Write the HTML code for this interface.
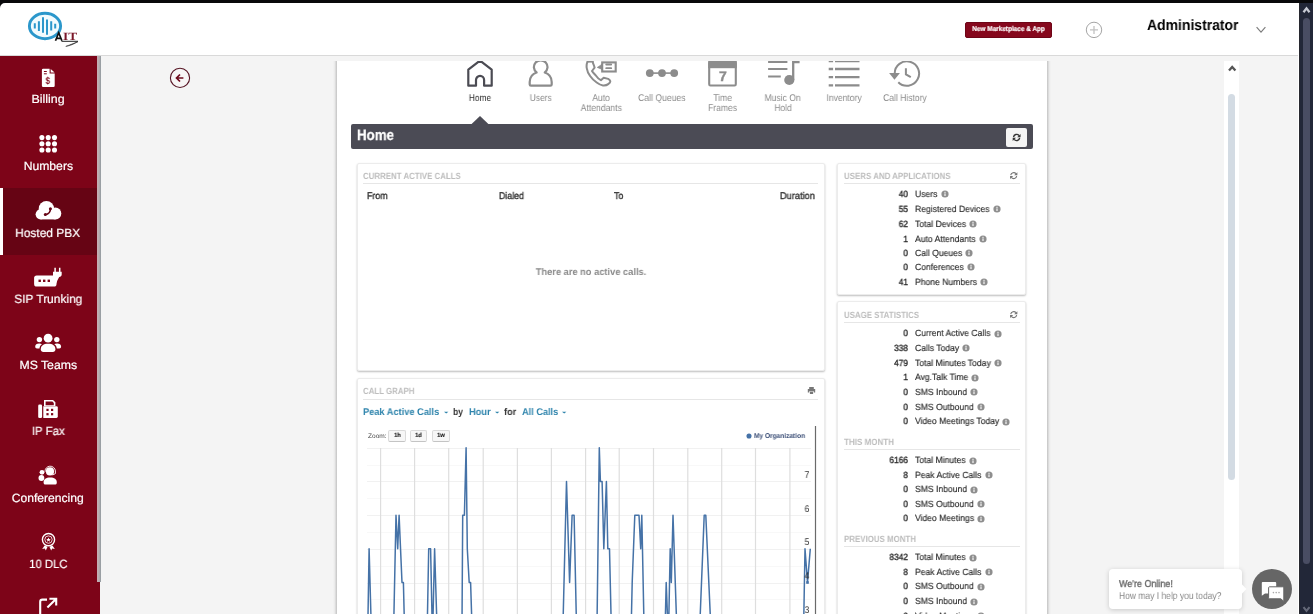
<!DOCTYPE html>
<html><head><meta charset="utf-8"><title>Home</title>
<style>
html,body{margin:0;padding:0;width:1313px;height:614px;overflow:hidden;}
body{background:#f4f4f4;font-family:"Liberation Sans",sans-serif;}
#root{position:relative;width:1313px;height:614px;overflow:hidden;background:#f4f4f4;}
.t{position:absolute;white-space:nowrap;display:block;text-rendering:geometricPrecision;will-change:transform;}
svg{position:absolute;overflow:visible;}
.card{position:absolute;background:#fff;border:1px solid #ececec;box-shadow:0 1px 2px rgba(0,0,0,.26);box-sizing:border-box;border-radius:2px;}
.hr{position:absolute;height:1px;background:#e6e6e6;}
</style></head><body><div id="root">
<div style="position:absolute;left:333px;top:61px;width:4px;height:560px;background:linear-gradient(90deg,rgba(0,0,0,0),rgba(0,0,0,.04) 40%,rgba(0,0,0,.2));"></div>
<div style="position:absolute;left:1047px;top:61px;width:4px;height:560px;background:linear-gradient(270deg,rgba(0,0,0,0),rgba(0,0,0,.04) 40%,rgba(0,0,0,.2));"></div>
<div style="position:absolute;left:337px;top:61px;width:710px;height:560px;background:#fff;"></div>
<svg width="1313" height="614" viewBox="0 0 1313 614" style="left:0;top:0">
<defs><clipPath id="pc"><rect x="337" y="61" width="710" height="560"/></clipPath></defs>
<g clip-path="url(#pc)" fill="none">
<path d="M468.3,85.7 V69.6 L480,60.6 L491.7,69.6 V85.7 H484.1 V80 a4.05,4.05 0 0 0 -8.1,0 V85.7 Z" stroke="#4b4b53" stroke-width="2.2" stroke-linejoin="round"/>
<path d="M536.6,72.5 A6.8,6.8 0 1 1 544.8,72.5 C549.4,74.1 551.7,77.6 551.7,82 V84.4 Q551.7,85.6 550.4,85.6 H531 Q529.7,85.6 529.7,84.4 V82 C529.7,77.6 532,74.1 536.6,72.5 Z" stroke="#8c8c8c" stroke-width="2.2" stroke-linejoin="round"/>
<!-- phone -->
<path d="M588.6,59 C586.5,63 586.3,66 586.8,68.4 C587.3,71.5 588.3,73.5 589.9,75.7 C591.8,78.5 594,80.5 596.7,82.5 C599,84.2 601,85.2 602.9,85.4 C605,85.6 606.8,85.2 608.2,84.1 C609.8,83 610.6,82 610.2,80.9 C609.9,80 609.2,79.4 608.2,78.9 L603.7,77.8 L600.9,80.2 C598.6,79 597,77.2 595.6,75.2 C594,73.5 592.8,72.4 592,71 L594.6,67.6 C594.2,66 593.6,64.6 593,63.2 L592.5,59" stroke="#8c8c8c" stroke-width="2" stroke-linejoin="round"/>
<path d="M588,61.8 H593" stroke="#8c8c8c" stroke-width="1.6"/>
<!-- bubble -->
<rect x="602.2" y="62.4" width="13.5" height="9.1" stroke="#8c8c8c" stroke-width="2.1"/>
<path d="M602,64.2 L597.2,67.4 L602,69.4 Z" fill="#8c8c8c" stroke="#8c8c8c" stroke-width="0.6" stroke-linejoin="round"/>
<path d="M606.2,64.5 H611.2 M606.2,68.2 H611.2" stroke="#8c8c8c" stroke-width="1.8" stroke-linecap="round"/>
<!-- queues -->
<path d="M650,73.1 H674" stroke="#8c8c8c" stroke-width="1.6"/>
<circle cx="649.8" cy="73.1" r="3.9" fill="#8c8c8c"/><circle cx="662" cy="73.1" r="3.9" fill="#8c8c8c"/><circle cx="674.2" cy="73.1" r="3.9" fill="#8c8c8c"/>
<!-- calendar -->
<rect x="709.2" y="62" width="26.6" height="23.5" rx="1.2" stroke="#8c8c8c" stroke-width="2.1"/>
<rect x="708.2" y="61" width="28.6" height="7.2" fill="#8c8c8c"/>
<!-- music -->
<path d="M768.1,62 H787.4 M768.1,69 H787.4 M768.1,76.5 H780.8" stroke="#8c8c8c" stroke-width="2"/>
<path d="M793.2,80 V62 H799.6" stroke="#8c8c8c" stroke-width="2.3"/>
<circle cx="789.3" cy="80" r="5.1" fill="#8c8c8c"/>
<!-- inventory -->
<path d="M828.7,61.2 H833.1 M835,61.2 H859.5 M828.7,69 H833.1 M835,69 H859.5 M828.7,77.2 H833.1 M835,77.2 H859.5 M828.7,85.3 H833.1 M835,85.3 H859.5" stroke="#8c8c8c" stroke-width="2.3"/>
<!-- history -->
<path d="M894.7,73.6 A12.2,12.2 0 1 1 898.3,82.2" stroke="#8c8c8c" stroke-width="2"/>
<path d="M889.1,73.1 H899.9 L894.5,79.7 Z" fill="#8c8c8c"/>
<path d="M905.9,68.2 V74.3 L910.8,77.1" stroke="#8c8c8c" stroke-width="2"/>
</g></svg>
<span class="t" style="left:718.61px;top:69.00px;font-size:14px;line-height:14px;color:#8c8c8c;font-weight:bold;transform:scale(1.0000,1);transform-origin:50% 12px;-webkit-text-stroke:0.4px #8c8c8c;">7</span>
<span class="t" style="left:467.00px;top:94.00px;font-size:9.75px;line-height:9.75px;color:#333;transform:scale(0.8574,1);transform-origin:50% 7px;">Home</span>
<span class="t" style="left:528.07px;top:94.00px;font-size:9.75px;line-height:9.75px;color:#8c8c8c;transform:scale(0.8641,1);transform-origin:50% 7px;">Users</span>
<span class="t" style="left:590.97px;top:94.00px;font-size:9.75px;line-height:9.75px;color:#8c8c8c;transform:scale(0.8625,1);transform-origin:50% 7px;">Auto</span>
<span class="t" style="left:577.99px;top:104.00px;font-size:9.75px;line-height:9.75px;color:#8c8c8c;transform:scale(0.8838,1);transform-origin:50% 7px;">Attendants</span>
<span class="t" style="left:634.97px;top:94.00px;font-size:9.75px;line-height:9.75px;color:#8c8c8c;transform:scale(0.8853,1);transform-origin:50% 7px;">Call Queues</span>
<span class="t" style="left:712.05px;top:94.00px;font-size:9.75px;line-height:9.75px;color:#8c8c8c;transform:scale(0.8730,1);transform-origin:50% 7px;">Time</span>
<span class="t" style="left:705.98px;top:104.00px;font-size:9.75px;line-height:9.75px;color:#8c8c8c;transform:scale(0.8776,1);transform-origin:50% 7px;">Frames</span>
<span class="t" style="left:762.41px;top:94.00px;font-size:9.75px;line-height:9.75px;color:#8c8c8c;transform:scale(0.8767,1);transform-origin:50% 7px;">Music On</span>
<span class="t" style="left:773.17px;top:104.00px;font-size:9.75px;line-height:9.75px;color:#8c8c8c;transform:scale(0.8527,1);transform-origin:50% 7px;">Hold</span>
<span class="t" style="left:823.75px;top:94.00px;font-size:9.75px;line-height:9.75px;color:#8c8c8c;transform:scale(0.8777,1);transform-origin:50% 7px;">Inventory</span>
<span class="t" style="left:879.78px;top:94.00px;font-size:9.75px;line-height:9.75px;color:#8c8c8c;transform:scale(0.8728,1);transform-origin:50% 7px;">Call History</span>
<div style="position:absolute;left:351px;top:124px;width:682px;height:24.5px;background:#4b4b55;border-radius:2px;"></div>
<svg width="20" height="10" viewBox="0 0 20 10" style="left:470px;top:115.4px"><path d="M1.6,9 L10,0.9 L18.4,9 Z" fill="#4b4b55"/></svg>
<span class="t" style="left:357.10px;top:128.00px;font-size:15px;line-height:15px;color:#fff;font-weight:bold;transform:scale(0.8878,1);transform-origin:0 12px;-webkit-text-stroke:0.25px #fff;">Home</span>
<div style="position:absolute;left:1006px;top:128px;width:21px;height:18.8px;background:#f4f4f4;border-radius:2px;"></div>
<svg width="1313" height="614" viewBox="0 0 1313 614" style="left:0;top:0"><g fill="none" stroke="#333" stroke-width="1.4"><path d="M1013.53,137.07 A3.1,3.1 0 0 1 1019.04,135.59"/><path d="M1019.67,137.93 A3.1,3.1 0 0 1 1014.16,139.41"/></g><path d="M1020.54,133.98 V137.19 H1017.18 Z" fill="#333"/><path d="M1012.66,141.02 V137.81 H1016.02 Z" fill="#333"/></svg>
<div class="card" style="left:356.5px;top:163px;width:468px;height:208px"></div>
<span class="t" style="left:363.30px;top:172.00px;font-size:9px;line-height:9px;color:#bdbdbd;font-weight:bold;transform:scale(0.8749,1);transform-origin:0 7px;">CURRENT ACTIVE CALLS</span>
<div class="hr" style="left:363px;top:183px;width:455px"></div>
<span class="t" style="left:366.60px;top:192.00px;font-size:9.75px;line-height:9.75px;color:#333;transform:scale(0.9000,1);transform-origin:0 7px;-webkit-text-stroke:0.35px #333;">From</span>
<span class="t" style="left:498.60px;top:192.00px;font-size:9.75px;line-height:9.75px;color:#333;transform:scale(0.9000,1);transform-origin:0 7px;-webkit-text-stroke:0.35px #333;">Dialed</span>
<span class="t" style="left:614.30px;top:192.00px;font-size:9.75px;line-height:9.75px;color:#333;transform:scale(0.9000,1);transform-origin:0 7px;-webkit-text-stroke:0.35px #333;">To</span>
<span class="t" style="left:777.65px;top:192.00px;font-size:9.75px;line-height:9.75px;color:#333;transform:scale(0.9470,1);transform-origin:100% 7px;-webkit-text-stroke:0.35px #333;">Duration</span>
<span class="t" style="left:532.51px;top:268.00px;font-size:9.75px;line-height:9.75px;color:#8a8a8a;font-weight:bold;transform:scale(0.9528,1);transform-origin:50% 7px;">There are no active calls.</span>
<div class="card" style="left:356.5px;top:378px;width:468px;height:260px"></div>
<span class="t" style="left:363.20px;top:387.00px;font-size:9px;line-height:9px;color:#bdbdbd;font-weight:bold;transform:scale(0.8753,1);transform-origin:0 7px;">CALL GRAPH</span>
<div class="hr" style="left:363px;top:399px;width:455px"></div>
<span class="t" style="left:363.40px;top:408.00px;font-size:9.75px;line-height:9.75px;color:#2e84ac;font-weight:bold;transform:scale(0.9478,1);transform-origin:0 7px;">Peak Active Calls</span>
<span class="t" style="left:453.30px;top:408.00px;font-size:9.75px;line-height:9.75px;color:#333;font-weight:bold;transform:scale(0.8701,1);transform-origin:0 7px;">by</span>
<span class="t" style="left:469.30px;top:408.00px;font-size:9.75px;line-height:9.75px;color:#2e84ac;font-weight:bold;transform:scale(0.9496,1);transform-origin:0 7px;">Hour</span>
<span class="t" style="left:504.00px;top:408.00px;font-size:9.75px;line-height:9.75px;color:#333;font-weight:bold;transform:scale(0.9387,1);transform-origin:0 7px;">for</span>
<span class="t" style="left:521.60px;top:408.00px;font-size:9.75px;line-height:9.75px;color:#2e84ac;font-weight:bold;transform:scale(0.9410,1);transform-origin:0 7px;">All Calls</span>
<svg width="6" height="4" viewBox="0 0 6 4" style="left:443.8px;top:411.3px"><path d="M0,0.8 H4.4 L2.2,2.6 Z" fill="#2e84ac"/></svg>
<svg width="6" height="4" viewBox="0 0 6 4" style="left:494.6px;top:411.3px"><path d="M0,0.8 H4.4 L2.2,2.6 Z" fill="#2e84ac"/></svg>
<svg width="6" height="4" viewBox="0 0 6 4" style="left:561.5999999999999px;top:411.3px"><path d="M0,0.8 H4.4 L2.2,2.6 Z" fill="#2e84ac"/></svg>
<svg width="10" height="10" viewBox="0 0 10 10" style="left:807px;top:386px"><path d="M2.2,1 H6.8 V3 H2.2 Z M0.8,3 H8.2 V6.6 H6.8 V5.2 H2.2 V6.6 H0.8 Z M2.9,5.8 H6.1 V8 H2.9 Z" fill="#777"/></svg>
<span class="t" style="left:367.90px;top:434.00px;font-size:6.5px;line-height:6.5px;color:#4a4a4a;transform:scale(1.0097,1);transform-origin:0 4px;">Zoom:</span>
<div style="position:absolute;left:388.1px;top:429.5px;width:18.3px;height:12px;background:#f7f7f7;border:1px solid #dadada;border-bottom-color:#c4c4c4;border-radius:2px;box-sizing:border-box;"></div>
<span class="t" style="left:394.05px;top:433.00px;font-size:6px;line-height:6px;color:#222;font-weight:bold;transform:scale(0.9283,1);transform-origin:50% 4px;-webkit-text-stroke:0.15px #222;">1h</span>
<div style="position:absolute;left:410px;top:429.5px;width:17.3px;height:12px;background:#f7f7f7;border:1px solid #dadada;border-bottom-color:#c4c4c4;border-radius:2px;box-sizing:border-box;"></div>
<span class="t" style="left:415.45px;top:433.00px;font-size:6px;line-height:6px;color:#222;font-weight:bold;transform:scale(0.9283,1);transform-origin:50% 4px;-webkit-text-stroke:0.15px #222;">1d</span>
<div style="position:absolute;left:432px;top:429.5px;width:18.1px;height:12px;background:#f7f7f7;border:1px solid #dadada;border-bottom-color:#c4c4c4;border-radius:2px;box-sizing:border-box;"></div>
<span class="t" style="left:437.35px;top:433.00px;font-size:6px;line-height:6px;color:#222;font-weight:bold;transform:scale(0.9620,1);transform-origin:50% 4px;-webkit-text-stroke:0.15px #222;">1w</span>
<svg width="8" height="8" viewBox="0 0 8 8" style="left:745.3px;top:431.5px"><circle cx="4" cy="4" r="2.55" fill="#4572a7"/></svg>
<span class="t" style="left:753.90px;top:433.00px;font-size:7px;line-height:7px;color:#3d5078;font-weight:bold;transform:scale(0.9367,1);transform-origin:0 5px;">My Organization</span>
<svg width="1313" height="614" viewBox="0 0 1313 614" style="left:0;top:0">
<g stroke="#f1f1f1" stroke-width="1">
<path d="M367,448.5 H811"/>
<path d="M367,481.5 H811"/>
<path d="M367,515.5 H811"/>
<path d="M367,549.5 H811"/>
<path d="M367,583.5 H811"/>
<path d="M367,616.5 H811"/>
</g><g stroke="#f8f8f8" stroke-width="1">
<path d="M367,465.5 H811"/>
<path d="M367,498.5 H811"/>
<path d="M367,532.5 H811"/>
<path d="M367,566.5 H811"/>
<path d="M367,599.5 H811"/>
</g><g stroke="#dedede" stroke-width="1.2">
<path d="M380.6,448 V614"/>
<path d="M414.6,448 V614"/>
<path d="M448.7,448 V614"/>
<path d="M483.2,448 V614"/>
<path d="M517.4,448 V614"/>
<path d="M551.4,448 V614"/>
<path d="M585.6,448 V614"/>
<path d="M619.2,448 V614"/>
<path d="M653.5,448 V614"/>
<path d="M687.8,448 V614"/>
<path d="M721.7,448 V614"/>
<path d="M755.5,448 V614"/>
<path d="M789.9,448 V614"/>
</g>
<path d="M367.6,640.0 L369.1,548.8 L371.6,640.0 M393.4,640.0 L396.0,515.2 L397.7,548.8 L399.1,515.2 L402.0,582.5 L403.4,582.5 L404.8,640.0 M427.0,640.0 L428.7,548.8 L430.6,548.8 L432.5,640.0 L434.6,548.8 L437.4,640.0 M461.9,640.0 L462.7,515.2 L464.4,515.2 L466.1,447.8 L467.3,548.8 L469.2,582.5 L470.6,582.5 L472.4,640.0 M562.6,640.0 L566.5,481.5 L569.6,582.5 L572.1,515.2 L574.1,515.2 L576.8,640.0 M596.8,640.0 L599.3,447.8 L600.4,481.5 L602.1,481.5 L603.8,548.8 L606.4,481.5 L607.8,548.8 L609.5,548.8 L611.6,640.0 M630.9,640.0 L632.2,582.5 L634.8,515.2 L639.0,515.2 L640.7,548.8 L641.8,515.2 L644.3,640.0 M664.8,640.0 L666.2,582.5 L668.4,640.0 L670.2,548.8 L671.3,582.5 L673.0,515.2 L677.2,640.0 M699.2,640.0 L704.2,515.2 L705.8,515.2 L711.4,640.0 M803.4,640.0 L805.0,548.8 L807.5,582.5 L810.3,548.8 " fill="none" stroke="#4572a7" stroke-width="1.5" stroke-linejoin="round"/>
<rect x="806.2" y="581.2" width="2.6" height="2.6" fill="#4572a7"/>
<path d="M815.5,426 V614" stroke="#6a6a6a" stroke-width="1.2"/>
</svg>
<span class="t" style="left:804.18px;top:471.00px;font-size:9.75px;line-height:9.75px;color:#333;transform:scale(0.9000,1);transform-origin:100% 7px;">7</span>
<span class="t" style="left:804.18px;top:505.00px;font-size:9.75px;line-height:9.75px;color:#333;transform:scale(0.9000,1);transform-origin:100% 7px;">6</span>
<span class="t" style="left:804.18px;top:538.00px;font-size:9.75px;line-height:9.75px;color:#333;transform:scale(0.9000,1);transform-origin:100% 7px;">5</span>
<span class="t" style="left:804.18px;top:572.00px;font-size:9.75px;line-height:9.75px;color:#333;transform:scale(0.9000,1);transform-origin:100% 7px;">4</span>
<span class="t" style="left:804.18px;top:606.00px;font-size:9.75px;line-height:9.75px;color:#333;transform:scale(0.9000,1);transform-origin:100% 7px;">3</span>
<div class="card" style="left:836.9px;top:162.5px;width:189.1px;height:132px"></div>
<span class="t" style="left:844.00px;top:172.00px;font-size:9px;line-height:9px;color:#bdbdbd;font-weight:bold;transform:scale(0.8789,1);transform-origin:0 7px;">USERS AND APPLICATIONS</span>
<svg width="1313" height="614" viewBox="0 0 1313 614" style="left:0;top:0"><g fill="none" stroke="#777" stroke-width="1.1"><path d="M1010.73,175.18 A3.0,3.0 0 0 1 1016.06,173.75"/><path d="M1016.67,176.02 A3.0,3.0 0 0 1 1011.34,177.45"/></g><path d="M1017.36,172.27 V175.30 H1014.11 Z" fill="#777"/><path d="M1010.04,178.93 V175.90 H1013.30 Z" fill="#777"/></svg>
<div class="hr" style="left:844px;top:183px;width:176px"></div>
<span class="t" style="left:897.59px;top:190.00px;font-size:9px;line-height:9px;color:#2a2a2a;transform:scale(0.9300,1);transform-origin:100% 7px;-webkit-text-stroke:0.35px #2a2a2a;">40</span>
<span class="t" style="left:915.30px;top:190.00px;font-size:9px;line-height:9px;color:#2a2a2a;transform:scale(0.9550,1);transform-origin:0 7px;-webkit-text-stroke:0.15px #2a2a2a;">Users</span>
<svg width="8" height="8" viewBox="0 0 8 8" style="left:940.55px;top:190.40px"><circle cx="4" cy="4" r="3.6" fill="#8e8e8e"/><rect x="3.45" y="3.4" width="1.1" height="2.6" fill="#fff"/><rect x="3.45" y="1.8" width="1.1" height="1.1" fill="#fff"/></svg>
<span class="t" style="left:897.59px;top:205.00px;font-size:9px;line-height:9px;color:#2a2a2a;transform:scale(0.9300,1);transform-origin:100% 7px;-webkit-text-stroke:0.35px #2a2a2a;">55</span>
<span class="t" style="left:915.30px;top:205.00px;font-size:9px;line-height:9px;color:#2a2a2a;transform:scale(0.9550,1);transform-origin:0 7px;-webkit-text-stroke:0.15px #2a2a2a;">Registered Devices</span>
<svg width="8" height="8" viewBox="0 0 8 8" style="left:992.62px;top:205.40px"><circle cx="4" cy="4" r="3.6" fill="#8e8e8e"/><rect x="3.45" y="3.4" width="1.1" height="2.6" fill="#fff"/><rect x="3.45" y="1.8" width="1.1" height="1.1" fill="#fff"/></svg>
<span class="t" style="left:897.59px;top:220.00px;font-size:9px;line-height:9px;color:#2a2a2a;transform:scale(0.9300,1);transform-origin:100% 7px;-webkit-text-stroke:0.35px #2a2a2a;">62</span>
<span class="t" style="left:915.30px;top:220.00px;font-size:9px;line-height:9px;color:#2a2a2a;transform:scale(0.9550,1);transform-origin:0 7px;-webkit-text-stroke:0.15px #2a2a2a;">Total Devices</span>
<svg width="8" height="8" viewBox="0 0 8 8" style="left:969.21px;top:220.40px"><circle cx="4" cy="4" r="3.6" fill="#8e8e8e"/><rect x="3.45" y="3.4" width="1.1" height="2.6" fill="#fff"/><rect x="3.45" y="1.8" width="1.1" height="1.1" fill="#fff"/></svg>
<span class="t" style="left:902.59px;top:235.00px;font-size:9px;line-height:9px;color:#2a2a2a;transform:scale(0.9300,1);transform-origin:100% 7px;-webkit-text-stroke:0.35px #2a2a2a;">1</span>
<span class="t" style="left:915.30px;top:235.00px;font-size:9px;line-height:9px;color:#2a2a2a;transform:scale(0.9550,1);transform-origin:0 7px;-webkit-text-stroke:0.15px #2a2a2a;">Auto Attendants</span>
<svg width="8" height="8" viewBox="0 0 8 8" style="left:978.79px;top:235.40px"><circle cx="4" cy="4" r="3.6" fill="#8e8e8e"/><rect x="3.45" y="3.4" width="1.1" height="2.6" fill="#fff"/><rect x="3.45" y="1.8" width="1.1" height="1.1" fill="#fff"/></svg>
<span class="t" style="left:902.59px;top:249.00px;font-size:9px;line-height:9px;color:#2a2a2a;transform:scale(0.9300,1);transform-origin:100% 7px;-webkit-text-stroke:0.35px #2a2a2a;">0</span>
<span class="t" style="left:915.30px;top:249.00px;font-size:9px;line-height:9px;color:#2a2a2a;transform:scale(0.9550,1);transform-origin:0 7px;-webkit-text-stroke:0.15px #2a2a2a;">Call Queues</span>
<svg width="8" height="8" viewBox="0 0 8 8" style="left:965.40px;top:249.40px"><circle cx="4" cy="4" r="3.6" fill="#8e8e8e"/><rect x="3.45" y="3.4" width="1.1" height="2.6" fill="#fff"/><rect x="3.45" y="1.8" width="1.1" height="1.1" fill="#fff"/></svg>
<span class="t" style="left:902.59px;top:263.00px;font-size:9px;line-height:9px;color:#2a2a2a;transform:scale(0.9300,1);transform-origin:100% 7px;-webkit-text-stroke:0.35px #2a2a2a;">0</span>
<span class="t" style="left:915.30px;top:263.00px;font-size:9px;line-height:9px;color:#2a2a2a;transform:scale(0.9550,1);transform-origin:0 7px;-webkit-text-stroke:0.15px #2a2a2a;">Conferences</span>
<svg width="8" height="8" viewBox="0 0 8 8" style="left:966.83px;top:263.40px"><circle cx="4" cy="4" r="3.6" fill="#8e8e8e"/><rect x="3.45" y="3.4" width="1.1" height="2.6" fill="#fff"/><rect x="3.45" y="1.8" width="1.1" height="1.1" fill="#fff"/></svg>
<span class="t" style="left:897.59px;top:278.00px;font-size:9px;line-height:9px;color:#2a2a2a;transform:scale(0.9300,1);transform-origin:100% 7px;-webkit-text-stroke:0.35px #2a2a2a;">41</span>
<span class="t" style="left:915.30px;top:278.00px;font-size:9px;line-height:9px;color:#2a2a2a;transform:scale(0.9550,1);transform-origin:0 7px;-webkit-text-stroke:0.15px #2a2a2a;">Phone Numbers</span>
<svg width="8" height="8" viewBox="0 0 8 8" style="left:980.21px;top:278.40px"><circle cx="4" cy="4" r="3.6" fill="#8e8e8e"/><rect x="3.45" y="3.4" width="1.1" height="2.6" fill="#fff"/><rect x="3.45" y="1.8" width="1.1" height="1.1" fill="#fff"/></svg>
<div class="card" style="left:836.9px;top:301px;width:189.1px;height:340px"></div>
<span class="t" style="left:844.00px;top:311.00px;font-size:9px;line-height:9px;color:#bdbdbd;font-weight:bold;transform:scale(0.8754,1);transform-origin:0 7px;">USAGE STATISTICS</span>
<svg width="1313" height="614" viewBox="0 0 1313 614" style="left:0;top:0"><g fill="none" stroke="#777" stroke-width="1.1"><path d="M1010.73,314.18 A3.0,3.0 0 0 1 1016.06,312.75"/><path d="M1016.67,315.02 A3.0,3.0 0 0 1 1011.34,316.45"/></g><path d="M1017.36,311.27 V314.30 H1014.11 Z" fill="#777"/><path d="M1010.04,317.93 V314.90 H1013.30 Z" fill="#777"/></svg>
<div class="hr" style="left:844px;top:322px;width:176px"></div>
<span class="t" style="left:902.59px;top:329.00px;font-size:9px;line-height:9px;color:#2a2a2a;transform:scale(0.9300,1);transform-origin:100% 7px;-webkit-text-stroke:0.35px #2a2a2a;">0</span>
<span class="t" style="left:915.30px;top:329.00px;font-size:9px;line-height:9px;color:#2a2a2a;transform:scale(0.9550,1);transform-origin:0 7px;-webkit-text-stroke:0.15px #2a2a2a;">Current Active Calls</span>
<svg width="8" height="8" viewBox="0 0 8 8" style="left:993.57px;top:329.70px"><circle cx="4" cy="4" r="3.6" fill="#8e8e8e"/><rect x="3.45" y="3.4" width="1.1" height="2.6" fill="#fff"/><rect x="3.45" y="1.8" width="1.1" height="1.1" fill="#fff"/></svg>
<span class="t" style="left:892.58px;top:344.00px;font-size:9px;line-height:9px;color:#2a2a2a;transform:scale(0.9300,1);transform-origin:100% 7px;-webkit-text-stroke:0.35px #2a2a2a;">338</span>
<span class="t" style="left:915.30px;top:344.00px;font-size:9px;line-height:9px;color:#2a2a2a;transform:scale(0.9550,1);transform-origin:0 7px;-webkit-text-stroke:0.15px #2a2a2a;">Calls Today</span>
<svg width="8" height="8" viewBox="0 0 8 8" style="left:962.37px;top:344.38px"><circle cx="4" cy="4" r="3.6" fill="#8e8e8e"/><rect x="3.45" y="3.4" width="1.1" height="2.6" fill="#fff"/><rect x="3.45" y="1.8" width="1.1" height="1.1" fill="#fff"/></svg>
<span class="t" style="left:892.58px;top:359.00px;font-size:9px;line-height:9px;color:#2a2a2a;transform:scale(0.9300,1);transform-origin:100% 7px;-webkit-text-stroke:0.35px #2a2a2a;">479</span>
<span class="t" style="left:915.30px;top:359.00px;font-size:9px;line-height:9px;color:#2a2a2a;transform:scale(0.9550,1);transform-origin:0 7px;-webkit-text-stroke:0.15px #2a2a2a;">Total Minutes Today</span>
<svg width="8" height="8" viewBox="0 0 8 8" style="left:993.91px;top:359.06px"><circle cx="4" cy="4" r="3.6" fill="#8e8e8e"/><rect x="3.45" y="3.4" width="1.1" height="2.6" fill="#fff"/><rect x="3.45" y="1.8" width="1.1" height="1.1" fill="#fff"/></svg>
<span class="t" style="left:902.59px;top:373.00px;font-size:9px;line-height:9px;color:#2a2a2a;transform:scale(0.9300,1);transform-origin:100% 7px;-webkit-text-stroke:0.35px #2a2a2a;">1</span>
<span class="t" style="left:915.30px;top:373.00px;font-size:9px;line-height:9px;color:#2a2a2a;transform:scale(0.9550,1);transform-origin:0 7px;-webkit-text-stroke:0.15px #2a2a2a;">Avg.Talk Time</span>
<svg width="8" height="8" viewBox="0 0 8 8" style="left:971.44px;top:373.74px"><circle cx="4" cy="4" r="3.6" fill="#8e8e8e"/><rect x="3.45" y="3.4" width="1.1" height="2.6" fill="#fff"/><rect x="3.45" y="1.8" width="1.1" height="1.1" fill="#fff"/></svg>
<span class="t" style="left:902.59px;top:388.00px;font-size:9px;line-height:9px;color:#2a2a2a;transform:scale(0.9300,1);transform-origin:100% 7px;-webkit-text-stroke:0.35px #2a2a2a;">0</span>
<span class="t" style="left:915.30px;top:388.00px;font-size:9px;line-height:9px;color:#2a2a2a;transform:scale(0.9550,1);transform-origin:0 7px;-webkit-text-stroke:0.15px #2a2a2a;">SMS Inbound</span>
<svg width="8" height="8" viewBox="0 0 8 8" style="left:970.18px;top:388.42px"><circle cx="4" cy="4" r="3.6" fill="#8e8e8e"/><rect x="3.45" y="3.4" width="1.1" height="2.6" fill="#fff"/><rect x="3.45" y="1.8" width="1.1" height="1.1" fill="#fff"/></svg>
<span class="t" style="left:902.59px;top:403.00px;font-size:9px;line-height:9px;color:#2a2a2a;transform:scale(0.9300,1);transform-origin:100% 7px;-webkit-text-stroke:0.35px #2a2a2a;">0</span>
<span class="t" style="left:915.30px;top:403.00px;font-size:9px;line-height:9px;color:#2a2a2a;transform:scale(0.9550,1);transform-origin:0 7px;-webkit-text-stroke:0.15px #2a2a2a;">SMS Outbound</span>
<svg width="8" height="8" viewBox="0 0 8 8" style="left:976.87px;top:403.10px"><circle cx="4" cy="4" r="3.6" fill="#8e8e8e"/><rect x="3.45" y="3.4" width="1.1" height="2.6" fill="#fff"/><rect x="3.45" y="1.8" width="1.1" height="1.1" fill="#fff"/></svg>
<span class="t" style="left:902.59px;top:417.00px;font-size:9px;line-height:9px;color:#2a2a2a;transform:scale(0.9300,1);transform-origin:100% 7px;-webkit-text-stroke:0.35px #2a2a2a;">0</span>
<span class="t" style="left:915.30px;top:417.00px;font-size:9px;line-height:9px;color:#2a2a2a;transform:scale(0.9550,1);transform-origin:0 7px;-webkit-text-stroke:0.15px #2a2a2a;">Video Meetings Today</span>
<svg width="8" height="8" viewBox="0 0 8 8" style="left:1002.36px;top:417.78px"><circle cx="4" cy="4" r="3.6" fill="#8e8e8e"/><rect x="3.45" y="3.4" width="1.1" height="2.6" fill="#fff"/><rect x="3.45" y="1.8" width="1.1" height="1.1" fill="#fff"/></svg>
<span class="t" style="left:844.00px;top:438.00px;font-size:9px;line-height:9px;color:#bdbdbd;font-weight:bold;transform:scale(0.8929,1);transform-origin:0 7px;">THIS MONTH</span>
<div class="hr" style="left:844px;top:449px;width:176px"></div>
<span class="t" style="left:887.58px;top:456.00px;font-size:9px;line-height:9px;color:#2a2a2a;transform:scale(0.9300,1);transform-origin:100% 7px;-webkit-text-stroke:0.35px #2a2a2a;">6166</span>
<span class="t" style="left:915.30px;top:456.00px;font-size:9px;line-height:9px;color:#2a2a2a;transform:scale(0.9550,1);transform-origin:0 7px;-webkit-text-stroke:0.15px #2a2a2a;">Total Minutes</span>
<svg width="8" height="8" viewBox="0 0 8 8" style="left:968.74px;top:456.80px"><circle cx="4" cy="4" r="3.6" fill="#8e8e8e"/><rect x="3.45" y="3.4" width="1.1" height="2.6" fill="#fff"/><rect x="3.45" y="1.8" width="1.1" height="1.1" fill="#fff"/></svg>
<span class="t" style="left:902.59px;top:471.00px;font-size:9px;line-height:9px;color:#2a2a2a;transform:scale(0.9300,1);transform-origin:100% 7px;-webkit-text-stroke:0.35px #2a2a2a;">8</span>
<span class="t" style="left:915.30px;top:471.00px;font-size:9px;line-height:9px;color:#2a2a2a;transform:scale(0.9550,1);transform-origin:0 7px;-webkit-text-stroke:0.15px #2a2a2a;">Peak Active Calls</span>
<svg width="8" height="8" viewBox="0 0 8 8" style="left:984.50px;top:471.30px"><circle cx="4" cy="4" r="3.6" fill="#8e8e8e"/><rect x="3.45" y="3.4" width="1.1" height="2.6" fill="#fff"/><rect x="3.45" y="1.8" width="1.1" height="1.1" fill="#fff"/></svg>
<span class="t" style="left:902.59px;top:485.00px;font-size:9px;line-height:9px;color:#2a2a2a;transform:scale(0.9300,1);transform-origin:100% 7px;-webkit-text-stroke:0.35px #2a2a2a;">0</span>
<span class="t" style="left:915.30px;top:485.00px;font-size:9px;line-height:9px;color:#2a2a2a;transform:scale(0.9550,1);transform-origin:0 7px;-webkit-text-stroke:0.15px #2a2a2a;">SMS Inbound</span>
<svg width="8" height="8" viewBox="0 0 8 8" style="left:970.18px;top:485.80px"><circle cx="4" cy="4" r="3.6" fill="#8e8e8e"/><rect x="3.45" y="3.4" width="1.1" height="2.6" fill="#fff"/><rect x="3.45" y="1.8" width="1.1" height="1.1" fill="#fff"/></svg>
<span class="t" style="left:902.59px;top:500.00px;font-size:9px;line-height:9px;color:#2a2a2a;transform:scale(0.9300,1);transform-origin:100% 7px;-webkit-text-stroke:0.35px #2a2a2a;">0</span>
<span class="t" style="left:915.30px;top:500.00px;font-size:9px;line-height:9px;color:#2a2a2a;transform:scale(0.9550,1);transform-origin:0 7px;-webkit-text-stroke:0.15px #2a2a2a;">SMS Outbound</span>
<svg width="8" height="8" viewBox="0 0 8 8" style="left:976.87px;top:500.30px"><circle cx="4" cy="4" r="3.6" fill="#8e8e8e"/><rect x="3.45" y="3.4" width="1.1" height="2.6" fill="#fff"/><rect x="3.45" y="1.8" width="1.1" height="1.1" fill="#fff"/></svg>
<span class="t" style="left:902.59px;top:514.00px;font-size:9px;line-height:9px;color:#2a2a2a;transform:scale(0.9300,1);transform-origin:100% 7px;-webkit-text-stroke:0.35px #2a2a2a;">0</span>
<span class="t" style="left:915.30px;top:514.00px;font-size:9px;line-height:9px;color:#2a2a2a;transform:scale(0.9550,1);transform-origin:0 7px;-webkit-text-stroke:0.15px #2a2a2a;">Video Meetings</span>
<svg width="8" height="8" viewBox="0 0 8 8" style="left:977.19px;top:514.80px"><circle cx="4" cy="4" r="3.6" fill="#8e8e8e"/><rect x="3.45" y="3.4" width="1.1" height="2.6" fill="#fff"/><rect x="3.45" y="1.8" width="1.1" height="1.1" fill="#fff"/></svg>
<span class="t" style="left:844.00px;top:535.00px;font-size:9px;line-height:9px;color:#bdbdbd;font-weight:bold;transform:scale(0.8780,1);transform-origin:0 7px;">PREVIOUS MONTH</span>
<div class="hr" style="left:844px;top:546px;width:176px"></div>
<span class="t" style="left:887.58px;top:553.00px;font-size:9px;line-height:9px;color:#2a2a2a;transform:scale(0.9300,1);transform-origin:100% 7px;-webkit-text-stroke:0.35px #2a2a2a;">8342</span>
<span class="t" style="left:915.30px;top:553.00px;font-size:9px;line-height:9px;color:#2a2a2a;transform:scale(0.9550,1);transform-origin:0 7px;-webkit-text-stroke:0.15px #2a2a2a;">Total Minutes</span>
<svg width="8" height="8" viewBox="0 0 8 8" style="left:968.74px;top:553.50px"><circle cx="4" cy="4" r="3.6" fill="#8e8e8e"/><rect x="3.45" y="3.4" width="1.1" height="2.6" fill="#fff"/><rect x="3.45" y="1.8" width="1.1" height="1.1" fill="#fff"/></svg>
<span class="t" style="left:902.59px;top:568.00px;font-size:9px;line-height:9px;color:#2a2a2a;transform:scale(0.9300,1);transform-origin:100% 7px;-webkit-text-stroke:0.35px #2a2a2a;">8</span>
<span class="t" style="left:915.30px;top:568.00px;font-size:9px;line-height:9px;color:#2a2a2a;transform:scale(0.9550,1);transform-origin:0 7px;-webkit-text-stroke:0.15px #2a2a2a;">Peak Active Calls</span>
<svg width="8" height="8" viewBox="0 0 8 8" style="left:984.50px;top:568.20px"><circle cx="4" cy="4" r="3.6" fill="#8e8e8e"/><rect x="3.45" y="3.4" width="1.1" height="2.6" fill="#fff"/><rect x="3.45" y="1.8" width="1.1" height="1.1" fill="#fff"/></svg>
<span class="t" style="left:902.59px;top:582.00px;font-size:9px;line-height:9px;color:#2a2a2a;transform:scale(0.9300,1);transform-origin:100% 7px;-webkit-text-stroke:0.35px #2a2a2a;">0</span>
<span class="t" style="left:915.30px;top:582.00px;font-size:9px;line-height:9px;color:#2a2a2a;transform:scale(0.9550,1);transform-origin:0 7px;-webkit-text-stroke:0.15px #2a2a2a;">SMS Outbound</span>
<svg width="8" height="8" viewBox="0 0 8 8" style="left:976.87px;top:582.90px"><circle cx="4" cy="4" r="3.6" fill="#8e8e8e"/><rect x="3.45" y="3.4" width="1.1" height="2.6" fill="#fff"/><rect x="3.45" y="1.8" width="1.1" height="1.1" fill="#fff"/></svg>
<span class="t" style="left:902.59px;top:597.00px;font-size:9px;line-height:9px;color:#2a2a2a;transform:scale(0.9300,1);transform-origin:100% 7px;-webkit-text-stroke:0.35px #2a2a2a;">0</span>
<span class="t" style="left:915.30px;top:597.00px;font-size:9px;line-height:9px;color:#2a2a2a;transform:scale(0.9550,1);transform-origin:0 7px;-webkit-text-stroke:0.15px #2a2a2a;">SMS Inbound</span>
<svg width="8" height="8" viewBox="0 0 8 8" style="left:970.18px;top:597.60px"><circle cx="4" cy="4" r="3.6" fill="#8e8e8e"/><rect x="3.45" y="3.4" width="1.1" height="2.6" fill="#fff"/><rect x="3.45" y="1.8" width="1.1" height="1.1" fill="#fff"/></svg>
<span class="t" style="left:902.59px;top:612.00px;font-size:9px;line-height:9px;color:#2a2a2a;transform:scale(0.9300,1);transform-origin:100% 7px;-webkit-text-stroke:0.35px #2a2a2a;">0</span>
<span class="t" style="left:915.30px;top:612.00px;font-size:9px;line-height:9px;color:#2a2a2a;transform:scale(0.9550,1);transform-origin:0 7px;-webkit-text-stroke:0.15px #2a2a2a;">Video Meetings</span>
<svg width="8" height="8" viewBox="0 0 8 8" style="left:977.19px;top:612.30px"><circle cx="4" cy="4" r="3.6" fill="#8e8e8e"/><rect x="3.45" y="3.4" width="1.1" height="2.6" fill="#fff"/><rect x="3.45" y="1.8" width="1.1" height="1.1" fill="#fff"/></svg>
<div style="position:absolute;left:1224px;top:61px;width:15px;height:560px;background:#fff;"></div>
<svg width="10" height="8" viewBox="0 0 10 8" style="left:1226.5px;top:64px"><path d="M2,6.6 L5.2,3 L8.4,6.6" fill="none" stroke="#555" stroke-width="2.3"/></svg>
<div style="position:absolute;left:1228px;top:94px;width:7px;height:386px;background:#d3dbe3;border-radius:3.5px;"></div>
<svg width="24" height="24" viewBox="0 0 24 24" style="left:168px;top:66px"><circle cx="12" cy="11.9" r="9.6" fill="#f7f5f5" stroke="#551322" stroke-width="1.1"/><path d="M15.4,12 H9.2 M12,8.5 L8.5,12 L12,15.5" fill="none" stroke="#6e0a1c" stroke-width="1.7" stroke-linejoin="miter"/></svg>
<div style="position:absolute;left:0px;top:0px;width:1313px;height:55px;background:#fff;border-bottom:1px solid #d9d9d9;"></div>
<div style="position:absolute;left:0px;top:0px;width:1313px;height:3px;background:#09090b;"></div>
<svg width="8" height="8" viewBox="0 0 8 8" style="left:0;top:3px"><path d="M0,0 H5 A5,5 0 0 0 0,5 Z" fill="#09090b"/></svg>
<svg width="90" height="52" viewBox="0 0 90 52" style="left:0;top:3px">
<ellipse cx="45" cy="23" rx="15.6" ry="12.7" fill="#f2fbfe" stroke="#2b97cb" stroke-width="2.9"/>
<g stroke="#2b97cb" stroke-width="2">
<path d="M34.8,20.3 V25.6 M38.9,18.3 V28 M43,14.2 V29.7 M47,16.6 V31.7 M51.2,18.3 V27.6 M55.2,20.7 V25.6"/></g>
<path d="M55.5,37.8 L58.7,29.8 L61.9,37.8 M56.7,35.3 H60.7" fill="none" stroke="#111" stroke-width="1.7"/>
<path d="M61.5,38.3 H78" stroke="#222" stroke-width="1"/>
<path d="M65.8,43.4 C70,41.8 74,40.4 78,38.6 C74.5,40.8 70.5,42.7 65.8,43.4 Z" fill="#333" stroke="#333" stroke-width="0.6"/>
</svg>
<span class="t" style="left:62.90px;top:32.00px;font-size:11px;line-height:11px;color:#7a1628;font-weight:bold;transform:scale(1.2200,1);transform-origin:0 8px;font-family:'Liberation Serif', serif;">IT</span>
<div style="position:absolute;left:965px;top:22px;width:87px;height:16px;background:#86081d;border-radius:2px;border:1px solid #6e0517;box-sizing:border-box;"></div>
<span class="t" style="left:969.45px;top:26.00px;font-size:7px;line-height:7px;color:#fff;font-weight:bold;transform:scale(0.9179,1);transform-origin:50% 5px;-webkit-text-stroke:0.2px #fff;">New Marketplace &amp; App</span>
<svg width="20" height="20" viewBox="0 0 20 20" style="left:1084px;top:20px"><circle cx="10" cy="9.9" r="7.7" fill="#fff" stroke="#9a9a9a" stroke-width="0.9"/><path d="M6,9.9 H14 M10,5.9 V13.9" stroke="#c2c2c2" stroke-width="1.3"/></svg>
<span class="t" style="left:1146.50px;top:18.00px;font-size:15px;line-height:15px;color:#000;font-weight:bold;transform:scale(0.9304,1);transform-origin:0 12px;">Administrator</span>
<svg width="12" height="8" viewBox="0 0 12 8" style="left:1254.5px;top:26px"><path d="M1.6,1.2 L6,6.2 L10.4,1.2" fill="none" stroke="#7d7d7d" stroke-width="1.15"/></svg>
<div style="position:absolute;left:0px;top:56px;width:100px;height:560px;background:#7d0418;"></div>
<div style="position:absolute;left:0px;top:188px;width:100px;height:66.7px;background:#660414;"></div>
<div style="position:absolute;left:0px;top:188px;width:3px;height:66.7px;background:#fff;"></div>
<div style="position:absolute;left:97px;top:56px;width:4px;height:526px;background:linear-gradient(90deg,#c9adb3 0%,#b9aeb2 50%,#8f9a9f 100%);"></div>
<span class="t" style="left:31.99px;top:93.00px;font-size:12px;line-height:12px;color:#fff;transform:scale(1.0338,1);transform-origin:50% 10px;-webkit-text-stroke:0.2px #fff;">Billing</span>
<span class="t" style="left:23.66px;top:160.00px;font-size:12px;line-height:12px;color:#fff;transform:scale(1.0148,1);transform-origin:50% 10px;-webkit-text-stroke:0.2px #fff;">Numbers</span>
<span class="t" style="left:15.32px;top:227.00px;font-size:12px;line-height:12px;color:#fff;transform:scale(0.9944,1);transform-origin:50% 10px;-webkit-text-stroke:0.2px #fff;">Hosted PBX</span>
<span class="t" style="left:13.76px;top:293.00px;font-size:12px;line-height:12px;color:#fff;transform:scale(0.9929,1);transform-origin:50% 10px;-webkit-text-stroke:0.2px #fff;">SIP Trunking</span>
<span class="t" style="left:19.77px;top:359.00px;font-size:12px;line-height:12px;color:#fff;transform:scale(1.0201,1);transform-origin:50% 10px;-webkit-text-stroke:0.2px #fff;">MS Teams</span>
<span class="t" style="left:30.77px;top:425.00px;font-size:12px;line-height:12px;color:#fff;transform:scale(0.9576,1);transform-origin:50% 10px;-webkit-text-stroke:0.2px #fff;">IP Fax</span>
<span class="t" style="left:12.31px;top:492.00px;font-size:12px;line-height:12px;color:#fff;transform:scale(1.0101,1);transform-origin:50% 10px;-webkit-text-stroke:0.2px #fff;">Conferencing</span>
<span class="t" style="left:27.66px;top:558.00px;font-size:12px;line-height:12px;color:#fff;transform:scale(0.9413,1);transform-origin:50% 10px;-webkit-text-stroke:0.2px #fff;">10 DLC</span>
<svg width="100" height="614" viewBox="0 0 100 614" style="left:0;top:0">
<!-- billing -->
<g transform="translate(0,0.6)"><path d="M43.1,68.2 H49.6 V73 H54.7 V85.2 A1.2,1.2 0 0 1 53.5,86.4 H43.1 A1.2,1.2 0 0 1 41.9,85.2 V69.4 A1.2,1.2 0 0 1 43.1,68.2 Z" fill="#fff"/>
<path d="M50.7,68.3 L54.6,72 H50.7 Z" fill="#fff"/>
<path d="M43.9,70.9 H46.8 M43.9,73.2 H46.8" stroke="#7d0418" stroke-width="1"/></g>
<!-- numbers -->
<g fill="#fff">
<circle cx="41.9" cy="137.6" r="2.55"/>
<circle cx="48.2" cy="137.6" r="2.55"/>
<circle cx="54.5" cy="137.6" r="2.55"/>
<circle cx="41.9" cy="143.8" r="2.55"/>
<circle cx="48.2" cy="143.8" r="2.55"/>
<circle cx="54.5" cy="143.8" r="2.55"/>
<circle cx="41.9" cy="150.0" r="2.55"/>
<circle cx="48.2" cy="150.0" r="2.55"/>
<circle cx="54.5" cy="150.0" r="2.55"/>
</g>
<!-- cloud -->
<g fill="#fff"><circle cx="46.4" cy="208.7" r="7.7"/><circle cx="55.4" cy="213.5" r="5.9"/><circle cx="40.7" cy="214.3" r="5.1"/><rect x="40.7" y="211" width="14.7" height="8.4"/></g>
<path d="M50.5,208.3 C50.6,211.8 48.6,214.2 45.1,214.7" fill="none" stroke="#660414" stroke-width="1.5"/>
<circle cx="50.4" cy="208.7" r="1.5" fill="#660414"/><circle cx="45.3" cy="214.4" r="1.5" fill="#660414"/>
<!-- sip router -->
<rect x="34.1" y="275.5" width="22.4" height="11" rx="2.6" fill="#fff"/>
<path d="M55.1,267.8 V272 M59.7,267.8 V272" stroke="#fff" stroke-width="1.5"/>
<path d="M53,271.8 H61.7 V274.4 C61.7,276 60.6,276.9 59.2,276.9 C57.8,279 57,281.5 56.2,283.5 L52,283.5 L52,276 L53,276 Z" fill="#fff"/>
<g fill="#7d0418"><rect x="38.5" y="279.6" width="2.4" height="2.4"/><rect x="43" y="279.6" width="2.4" height="2.4"/><rect x="47.6" y="279.6" width="2.4" height="2.4"/></g>
<!-- ms teams users -->
<g fill="#fff">
<circle cx="48.1" cy="338.2" r="4.4"/>
<path d="M40.8,349.2 C40.8,345.8 43.4,343.8 48.1,343.8 C52.8,343.8 55.4,345.8 55.4,349.2 C55.4,351 54.4,351.9 52.8,351.9 H43.4 C41.8,351.9 40.8,351 40.8,349.2 Z"/>
<circle cx="39.4" cy="339.6" r="2.7"/><circle cx="56.8" cy="339.6" r="2.7"/>
<path d="M35.2,346.6 C35.2,344.6 36.7,343.4 39.2,343.4 C40.4,343.4 41.4,343.7 42,344.2 C40.4,345.2 39.6,346.6 39.5,348.6 H37 C35.8,348.6 35.2,347.8 35.2,346.6 Z"/>
<path d="M61.1,346.6 C61.1,344.6 59.6,343.4 57.1,343.4 C55.9,343.4 54.9,343.7 54.3,344.2 C55.9,345.2 56.7,346.6 56.8,348.6 H59.3 C60.5,348.6 61.1,347.8 61.1,346.6 Z"/>
</g>
<!-- fax -->
<g fill="#fff">
<rect x="38.2" y="404.6" width="3.9" height="13.4" rx="1.3"/>
<path d="M44,399.9 H53 L55.4,402.3 V406 H44 Z"/>
<path d="M43.3,406.2 H56.4 A1.4,1.4 0 0 1 57.8,407.6 V416.6 A1.4,1.4 0 0 1 56.4,418 H43.3 Z"/>
</g>
<path d="M45.6,401.5 H52.4 L53.8,402.9 V405.2 H45.6 Z" fill="#7d0418"/>
<g fill="#7d0418"><rect x="46.4" y="408.8" width="2.2" height="2.2"/><rect x="51" y="408.8" width="2.2" height="2.2"/><rect x="46.4" y="413.1" width="2.2" height="2.2"/><rect x="51" y="413.1" width="2.2" height="2.2"/></g>
<!-- conferencing -->
<g fill="#fff">
<circle cx="50" cy="471.4" r="4.1"/>
<path d="M43.6,482.4 C43.6,479 46,477.4 50.2,477.4 C54.4,477.4 56.8,479 56.8,482.4 C56.8,483.9 56,484.6 54.6,484.6 H45.8 C44.4,484.6 43.6,483.9 43.6,482.4 Z"/>
<circle cx="42" cy="472.3" r="2.4"/>
<circle cx="41.4" cy="478" r="2.9"/>
</g>
<path d="M45,471.8 A5.2,5.2 0 0 1 55.4,471 V473.6 L52.6,475" fill="none" stroke="#fff" stroke-width="0.9"/>
<!-- award -->
<circle cx="48.5" cy="539.6" r="6.1" fill="none" stroke="#fff" stroke-width="1.4"/>
<circle cx="48.5" cy="539.6" r="3.7" fill="none" stroke="#fff" stroke-width="0.8"/>
<path d="M48.5,537.4 L49.2,538.9 L50.8,539 L49.6,540.1 L50,541.7 L48.5,540.8 L47,541.7 L47.4,540.1 L46.2,539 L47.8,538.9 Z" fill="#fff"/>
<path d="M44.6,545.6 L42.2,549 L44.8,548.6 L45.8,550.6 L47.6,546.8 Z M52.4,545.6 L54.8,549 L52.2,548.6 L51.2,550.6 L49.4,546.8 Z" fill="#fff"/>
<!-- external -->
<path d="M47,599.6 H42.4 A2.2,2.2 0 0 0 40.2,601.8 V614" fill="none" stroke="#fff" stroke-width="2.1"/>
<path d="M49.4,598.7 H56.2 V605.5 M56,598.9 L47.4,607.5" fill="none" stroke="#fff" stroke-width="2.1"/>
</svg>
<span class="t" style="left:45.42px;top:77.00px;font-size:10px;line-height:10px;color:#7d0418;font-weight:bold;transform:scale(0.7800,1);transform-origin:50% 7px;">$</span>
<div style="position:absolute;left:1109px;top:569px;width:133px;height:40px;background:#fff;border-radius:4px;box-shadow:0 1px 5px rgba(0,0,0,.18);"></div>
<svg width="6" height="10" viewBox="0 0 6 10" style="left:1242px;top:584px"><path d="M0,0.5 L4.3,5 L0,9.5 Z" fill="#fff"/></svg>
<span class="t" style="left:1119.00px;top:580.00px;font-size:10px;line-height:10px;color:#666;transform:scale(0.8954,1);transform-origin:0 7px;-webkit-text-stroke:0.35px #666;">We're Online!</span>
<span class="t" style="left:1119.00px;top:592.00px;font-size:10px;line-height:10px;color:#8a8a8a;transform:scale(0.8489,1);transform-origin:0 7px;">How may I help you today?</span>
<svg width="44" height="44" viewBox="0 0 44 44" style="left:1250px;top:567px">
<circle cx="22" cy="22" r="20" fill="#666"/>
<path d="M12.6,15 H25.2 A1,1 0 0 1 26.2,16 V26.4 H15 L11.8,28.8 V16 A1,1 0 0 1 12.6,15 Z" fill="#fff"/>
<g transform="translate(0.8,1.2)"><path d="M18.6,18.6 H32 A1,1 0 0 1 33,19.6 V33.2 L30,30.6 H18.6 A1,1 0 0 1 17.8,29.6 V19.6 A1,1 0 0 1 18.6,18.6 Z" fill="#fff" stroke="#666" stroke-width="1"/>
<g fill="#aaa"><circle cx="22.6" cy="24.4" r="0.8"/><circle cx="25.4" cy="24.4" r="0.8"/><circle cx="28.2" cy="24.4" r="0.8"/></g></g>
</svg>
<div style="position:absolute;left:1298px;top:3px;width:1px;height:611px;background:#fff;"></div>
<div style="position:absolute;left:1299px;top:3px;width:14px;height:611px;background:#222738;"></div>
<div style="position:absolute;left:1299px;top:3px;width:1px;height:611px;background:#27282f;"></div>
<div style="position:absolute;left:1303px;top:18px;width:7px;height:545.5px;background:#494d63;border-radius:3.5px;"></div>
<svg width="14" height="14" viewBox="0 0 14 14" style="left:1299px;top:3px"><path d="M4.5,9.2 L7.5,5.4 L10.5,9.2" fill="none" stroke="#c6c9d3" stroke-width="2.3"/></svg>
<svg width="14" height="10" viewBox="0 0 14 10" style="left:1299px;top:605px"><path d="M4.5,2.2 L7.5,5.8 L10.5,2.2" fill="none" stroke="#656979" stroke-width="2.1"/></svg>
</div></body></html>
